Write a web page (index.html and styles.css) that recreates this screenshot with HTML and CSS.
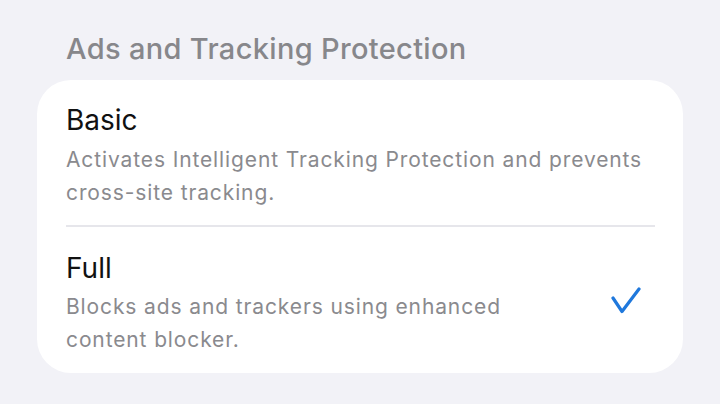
FILE: index.html
```html
<!DOCTYPE html>
<html lang="en">
<head>
  <meta charset="UTF-8">
  <meta name="viewport" content="width=device-width, initial-scale=1.0">
  <title>Ads and Tracking Protection</title>
  <link rel="stylesheet" href="styles.css">
</head>
<body>
  <div class="settings">
    <h2 class="section-title">Ads and Tracking Protection</h2>

    <div class="group">
      <div class="option">
        <div class="option-text">
          <div class="option-name">Basic</div>
          <div class="option-desc">Activates Intelligent Tracking Protection and prevents cross-site tracking.</div>
        </div>
      </div>

      <div class="divider"></div>

      <div class="option option-last">
        <div class="option-text">
          <div class="option-name">Full</div>
          <div class="option-desc">Blocks ads and trackers using enhanced<br>content blocker.</div>
        </div>
        <svg class="check" width="30" height="28" viewBox="0 0 30 28">
          <polyline points="2,11 11,24.5 28,2" fill="none" stroke="#1f78dc" stroke-width="3.2" stroke-linecap="round" stroke-linejoin="round"/>
        </svg>
      </div>
    </div>
  </div>
</body>
</html>
```

FILE: styles.css
```css
body { margin: 0; background: #f2f2f7; font-family: Inter, "Noto Sans", sans-serif; }
.settings { padding: 31px 37px 0 37px; }
.section-title { margin: 0 0 13px 29px; font-size: 29px; line-height: 36px; font-weight: 500; color: #87878b; letter-spacing: 0.33px; }
.group { background: #fff; border-radius: 34px; height: 293px; box-sizing: border-box; padding: 0 28px 0 29px; }
.option { display: flex; align-items: center; padding: 23px 0 16px 0; }
.option-last { padding: 24px 0 18px 0; }
.option-text { flex: 1; }
.option-name { font-size: 28px; line-height: 34px; color: #111; }
.option-desc { margin-top: 6px; font-size: 21px; line-height: 33px; color: #8a8a8e; letter-spacing: 0.88px; }
.option-last .option-desc { margin-top: 5px; }
.divider { height: 2px; background: #e6e6eb; }
.check { margin: 0 14px 6px 0; }
```
